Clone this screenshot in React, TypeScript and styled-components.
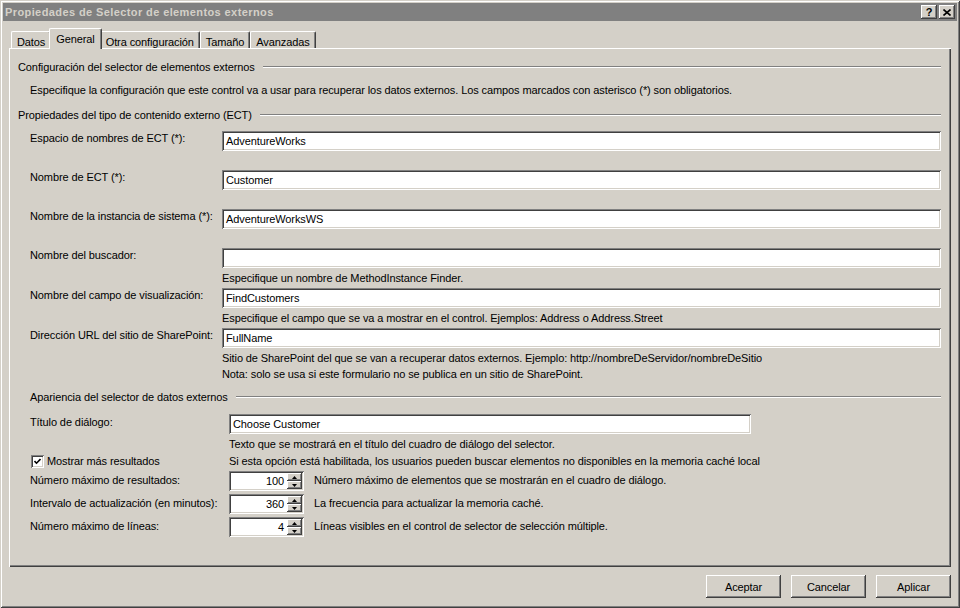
import * as React from 'react'
import styled, { createGlobalStyle } from 'styled-components'

const GlobalStyle = createGlobalStyle`
  html, body {
    margin: 0;
    padding: 0;
    background: #d4d0c8;
  }
  body {
    font-family: Tahoma, "Liberation Sans", Arial, sans-serif;
    font-size: 11px;
    letter-spacing: -0.1px;
    color: #000;
  }
  * {
    box-sizing: border-box;
  }
`

const raised = `
  background: #d4d0c8;
  box-shadow: inset -1px -1px #404040, inset 1px 1px #ffffff,
    inset -2px -2px #808080, inset 2px 2px #d4d0c8;
`

const sunken = `
  background: #ffffff;
  box-shadow: inset 1px 1px #808080, inset -1px -1px #ffffff,
    inset 2px 2px #404040, inset -2px -2px #d4d0c8;
`

const SWindow = styled.div`
  width: 960px;
  height: 608px;
  padding: 3px;
  display: flex;
  flex-direction: column;
  background: #d4d0c8;
  box-shadow: inset 1px 1px #d4d0c8, inset -1px -1px #404040,
    inset 2px 2px #ffffff, inset -2px -2px #808080;
`

const STitleBar = styled.div`
  height: 18px;
  flex: none;
  display: flex;
  align-items: center;
  padding: 0 2px;
  background: #808080;
  color: #d4d0c8;
  font-weight: bold;
`

const STitle = styled.div`
  flex: 1;
  letter-spacing: 0.4px;
  white-space: nowrap;
`

const STitleButton = styled.div`
  ${raised}
  width: 16px;
  height: 14px;
  margin-left: 2px;
  display: flex;
  align-items: center;
  justify-content: center;
  color: #000;
  font-weight: bold;
  font-size: 11px;
  line-height: 14px;
`

const SBody = styled.div`
  flex: 1;
  display: flex;
  flex-direction: column;
  padding: 7px 6px 0;
`

const STabRow = styled.div`
  height: 20px;
  flex: none;
  display: flex;
  align-items: flex-end;
  padding-left: 2px;
  position: relative;
  z-index: 1;
`

const STab = styled.div<{ $active?: boolean }>`
  height: ${p => (p.$active ? '21px' : '17px')};
  margin: ${p => (p.$active ? '0 -2px -1px' : '0')};
  padding: ${p => (p.$active ? '3px 6px 0' : '3px 5px 0')};
  line-height: 14px;
  background: #d4d0c8;
  border-top: 1px solid #ffffff;
  border-left: 1px solid #ffffff;
  border-right: 1px solid #404040;
  border-radius: 2px 2px 0 0;
  box-shadow: inset -1px 0 #808080;
  white-space: nowrap;
  position: relative;
  z-index: ${p => (p.$active ? 2 : 0)};
`

const SPanel = styled.div`
  flex: 1;
  padding: 12px 10px 0 9px;
  background: #d4d0c8;
  box-shadow: inset 1px 1px #ffffff, inset -1px -1px #404040,
    inset -2px -2px #808080;
`

const SSectionHeader = styled.div<{ $indent?: number }>`
  display: flex;
  align-items: center;
  height: 14px;
  line-height: 14px;
  padding-left: ${p => p.$indent || 0}px;
  margin-top: ${p => (p.$indent ? 6 : 0)}px;
  white-space: nowrap;
`

const SRule = styled.div`
  flex: 1;
  height: 2px;
  margin-left: 8px;
  border-top: 1px solid #808080;
  border-bottom: 1px solid #ffffff;
`

const SDescription = styled.div`
  margin: 9px 0 11px 12px;
  line-height: 14px;
  white-space: nowrap;
`

const SFieldList = styled.div`
  margin: 9px 0 0 12px;
  display: flex;
  flex-direction: column;
`

const SFieldRow = styled.div<{ $labelWidth: number }>`
  display: grid;
  grid-template-columns: ${p => p.$labelWidth}px 1fr;
`

const SFieldLabel = styled.div<{ $offset?: number }>`
  line-height: 14px;
  padding-top: ${p => p.$offset || 0}px;
  white-space: nowrap;
`

const STextBox = styled.div<{ $width?: number }>`
  ${sunken}
  height: 20px;
  width: ${p => (p.$width ? `${p.$width}px` : '100%')};
  padding: 0 4px;
  line-height: 20px;
  white-space: nowrap;
`

const SHint = styled.div`
  min-height: 19px;
  padding: 2px 0;
  line-height: 16px;
  white-space: nowrap;
`

const SAppearance = styled.div`
  margin: 10px 0 0 12px;
  display: flex;
  flex-direction: column;
`

const SSmallHint = styled.div`
  padding-top: 3px;
  line-height: 14px;
  white-space: nowrap;
`

const SCheckRow = styled.div`
  display: grid;
  grid-template-columns: 199px 1fr;
  margin-top: 3px;
  height: 14px;
  line-height: 14px;
  white-space: nowrap;
`

const SCheckLabel = styled.label`
  display: flex;
  align-items: center;
  padding-left: 1px;
`

const SCheckBox = styled.div`
  ${sunken}
  width: 13px;
  height: 13px;
  margin-right: 3px;
  display: flex;
  align-items: center;
  justify-content: center;
`

const SSpinRow = styled.div`
  display: grid;
  grid-template-columns: 199px 75px 1fr;
  margin-top: 3px;
  align-items: start;
`

const SSpinBox = styled.div`
  ${sunken}
  height: 20px;
  display: flex;
  padding: 2px;
`

const SSpinValue = styled.div`
  flex: 1;
  text-align: right;
  padding-right: 3px;
  line-height: 16px;
`

const SSpinButtons = styled.div`
  width: 15px;
  display: flex;
  flex-direction: column;
`

const SSpinButton = styled.div`
  ${raised}
  flex: 1;
  display: flex;
  align-items: center;
  justify-content: center;
`

const SSpinText = styled.div`
  padding: 2px 0 0 10px;
  line-height: 14px;
  white-space: nowrap;
`

const SButtonRow = styled.div`
  height: 38px;
  flex: none;
  padding: 8px 0 7px;
  display: flex;
  justify-content: flex-end;
  gap: 10px;
`

const SButton = styled.div`
  ${raised}
  width: 75px;
  height: 23px;
  display: flex;
  align-items: center;
  justify-content: center;
`

const CloseGlyph = () => (
  <svg width="8" height="7" viewBox="0 0 8 7">
    <path d="M0.5 0.5 L7.5 6.5 M7.5 0.5 L0.5 6.5" stroke="#000" strokeWidth="1.6" fill="none" />
  </svg>
)

const Arrow = ({ up }: { up?: boolean }) => (
  <svg width="5" height="3" viewBox="0 0 5 3">
    <path d={up ? 'M2.5 0 L5 3 L0 3 Z' : 'M0 0 L5 0 L2.5 3 Z'} fill="#000" />
  </svg>
)

const CheckMark = () => (
  <svg width="7" height="7" viewBox="0 0 7 7">
    <path d="M0.5 3 L2.5 5.2 L6.5 1" stroke="#000" strokeWidth="1.6" fill="none" />
  </svg>
)

const Field = (props: { label: string; value: string; hint?: React.ReactNode }) => (
  <SFieldRow $labelWidth={192}>
    <SFieldLabel>{props.label}</SFieldLabel>
    <div>
      <STextBox>{props.value}</STextBox>
      <SHint>{props.hint}</SHint>
    </div>
  </SFieldRow>
)

const Spin = (props: { label: string; value: string; text: string }) => (
  <SSpinRow>
    <SFieldLabel $offset={2}>{props.label}</SFieldLabel>
    <SSpinBox>
      <SSpinValue>{props.value}</SSpinValue>
      <SSpinButtons>
        <SSpinButton>
          <Arrow up />
        </SSpinButton>
        <SSpinButton>
          <Arrow />
        </SSpinButton>
      </SSpinButtons>
    </SSpinBox>
    <SSpinText>{props.text}</SSpinText>
  </SSpinRow>
)

const tabs = ['Datos', 'General', 'Otra configuración', 'Tamaño', 'Avanzadas']

const App = () => {
  return (
    <>
      <GlobalStyle />
      <SWindow>
        <STitleBar>
          <STitle>Propiedades de Selector de elementos externos</STitle>
          <STitleButton>?</STitleButton>
          <STitleButton>
            <CloseGlyph />
          </STitleButton>
        </STitleBar>
        <SBody>
          <STabRow>
            {tabs.map(t => (
              <STab key={t} $active={t === 'General'}>
                {t}
              </STab>
            ))}
          </STabRow>
          <SPanel>
            <SSectionHeader>
              Configuración del selector de elementos externos
              <SRule />
            </SSectionHeader>
            <SDescription>
              Especifique la configuración que este control va a usar para recuperar los datos externos. Los campos
              marcados con asterisco (*) son obligatorios.
            </SDescription>
            <SSectionHeader>
              Propiedades del tipo de contenido externo (ECT)
              <SRule />
            </SSectionHeader>
            <SFieldList>
              <Field label="Espacio de nombres de ECT (*):" value="AdventureWorks" />
              <Field label="Nombre de ECT (*):" value="Customer" />
              <Field label="Nombre de la instancia de sistema (*):" value="AdventureWorksWS" />
              <Field
                label="Nombre del buscador:"
                value=""
                hint="Especifique un nombre de MethodInstance Finder."
              />
              <Field
                label="Nombre del campo de visualización:"
                value="FindCustomers"
                hint="Especifique el campo que se va a mostrar en el control. Ejemplos: Address o Address.Street"
              />
              <Field
                label="Dirección URL del sitio de SharePoint:"
                value="FullName"
                hint={
                  <>
                    Sitio de SharePoint del que se van a recuperar datos externos. Ejemplo:
                    http://nombreDeServidor/nombreDeSitio
                    <br />
                    Nota: solo se usa si este formulario no se publica en un sitio de SharePoint.
                  </>
                }
              />
            </SFieldList>
            <SSectionHeader $indent={12}>
              Apariencia del selector de datos externos
              <SRule />
            </SSectionHeader>
            <SAppearance>
              <SFieldRow $labelWidth={199}>
                <SFieldLabel $offset={1}>Título de diálogo:</SFieldLabel>
                <div>
                  <STextBox $width={522}>Choose Customer</STextBox>
                  <SSmallHint>Texto que se mostrará en el título del cuadro de diálogo del selector.</SSmallHint>
                </div>
              </SFieldRow>
              <SCheckRow>
                <SCheckLabel>
                  <SCheckBox>
                    <CheckMark />
                  </SCheckBox>
                  Mostrar más resultados
                </SCheckLabel>
                <div>
                  Si esta opción está habilitada, los usuarios pueden buscar elementos no disponibles en la memoria caché
                  local
                </div>
              </SCheckRow>
              <Spin
                label="Número máximo de resultados:"
                value="100"
                text="Número máximo de elementos que se mostrarán en el cuadro de diálogo."
              />
              <Spin
                label="Intervalo de actualización (en minutos):"
                value="360"
                text="La frecuencia para actualizar la memoria caché."
              />
              <Spin
                label="Número máximo de líneas:"
                value="4"
                text="Líneas visibles en el control de selector de selección múltiple."
              />
            </SAppearance>
          </SPanel>
          <SButtonRow>
            <SButton>Aceptar</SButton>
            <SButton>Cancelar</SButton>
            <SButton>Aplicar</SButton>
          </SButtonRow>
        </SBody>
      </SWindow>
    </>
  )
}

export default App
